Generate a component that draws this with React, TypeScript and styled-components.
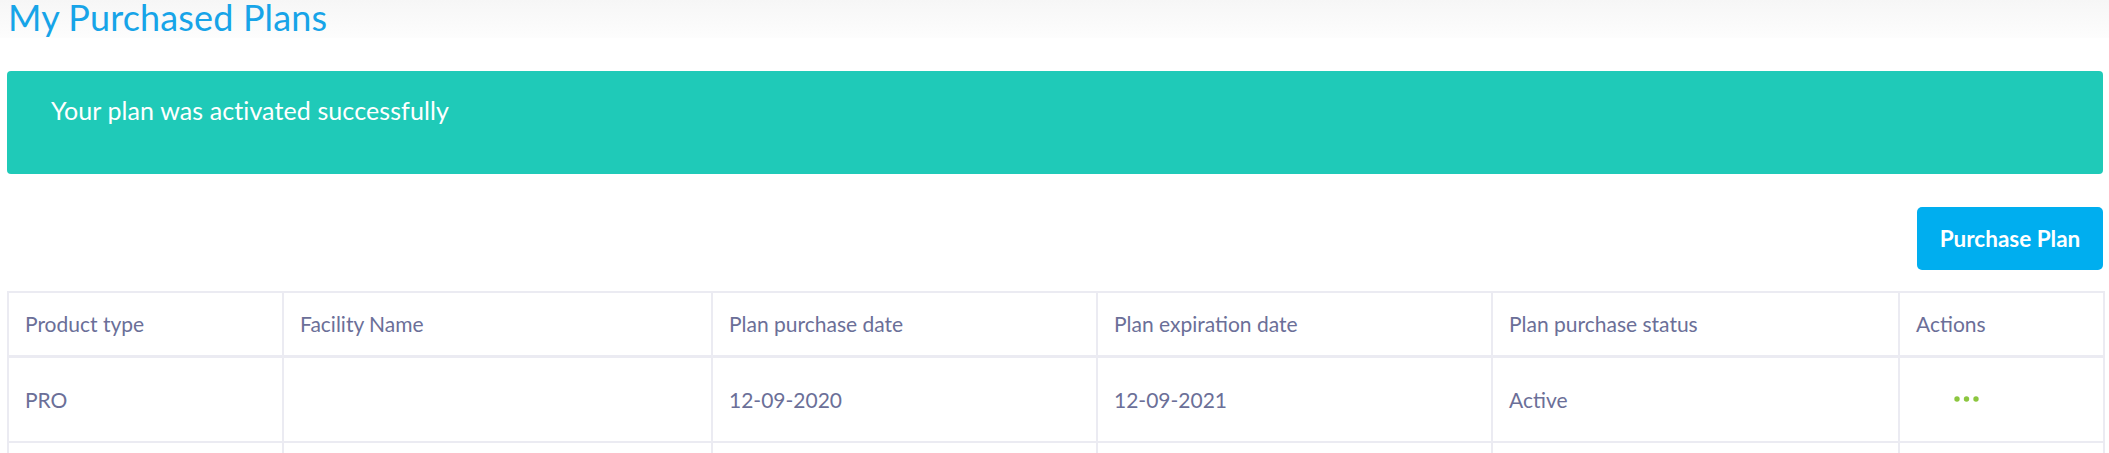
import React from "react";
import styled, { createGlobalStyle } from "styled-components";

const GlobalStyle = createGlobalStyle`
  html, body {
    margin: 0;
    padding: 0;
    background: #ffffff;
    overflow: hidden;
    font-family: "Lato", "Liberation Sans", sans-serif;
  }
  * { box-sizing: border-box; }
`;

const Page = styled.div`
  width: 2109px;
  display: flex;
  flex-direction: column;
`;

const TitleBar = styled.header`
  height: 38px;
  padding-left: 8px;
  background: linear-gradient(180deg, #f6f6f6 0%, #fdfdfd 100%);
  display: flex;
  align-items: flex-start;
`;

const Title = styled.h1`
  margin: 0;
  font-family: "Lato", "Liberation Sans", sans-serif;
  font-weight: 400;
  font-size: 36px;
  line-height: 34px;
  color: #17a4e8;
  letter-spacing: 0.15px;
`;

const Content = styled.main`
  padding: 33px 6px 0 7px;
  display: flex;
  flex-direction: column;
`;

const Alert = styled.div`
  height: 103px;
  border-radius: 4px;
  background: #1fcab8;
  padding: 23px 0 0 44px;
`;

const AlertText = styled.p`
  margin: 0;
  color: #ffffff;
  font-size: 25px;
  line-height: 32px;
  font-weight: 400;
  letter-spacing: 0.1px;
`;

const Toolbar = styled.div`
  display: flex;
  justify-content: flex-end;
  margin-top: 33px;
  margin-bottom: 21px;
`;

const PrimaryButton = styled.button`
  width: 186px;
  height: 63px;
  border: none;
  border-radius: 5px;
  background: #00aeef;
  color: #ffffff;
  font-family: "Lato", "Liberation Sans", sans-serif;
  font-weight: 700;
  font-size: 22.5px;
  cursor: pointer;
  padding: 0;
`;

const Table = styled.table`
  width: 100%;
  table-layout: fixed;
  border-collapse: collapse;
  border: 2px solid #ebebf2;
`;

const Col = styled.col<{ $w: number }>`
  width: ${(p) => p.$w}px;
`;

const HeadCell = styled.th`
  height: 64px;
  padding: 0 16px;
  border: 2px solid #ebebf2;
  border-bottom-width: 3px;
  text-align: left;
  font-weight: 400;
  font-size: 21px;
  color: #6b6f98;
  vertical-align: middle;
`;

const Cell = styled.td`
  height: 86px;
  padding: 0 16px;
  border: 2px solid #ebebf2;
  font-size: 21px;
  color: #6b6f98;
  vertical-align: middle;
`;

const ActionButton = styled.button`
  width: 101px;
  height: 20px;
  padding: 0;
  border: none;
  background: transparent;
  display: flex;
  align-items: center;
  justify-content: center;
  cursor: pointer;
`;

const DotsIcon = () => (
  <svg width="26" height="6" viewBox="0 0 26 6" aria-hidden="true">
    <circle cx="3" cy="3" r="2.7" fill="#8cc63f" />
    <circle cx="12.5" cy="3" r="2.7" fill="#8cc63f" />
    <circle cx="22" cy="3" r="2.7" fill="#8cc63f" />
  </svg>
);

const columns = [
  { label: "Product type", w: 275 },
  { label: "Facility Name", w: 429 },
  { label: "Plan purchase date", w: 385 },
  { label: "Plan expiration date", w: 395 },
  { label: "Plan purchase status", w: 407 },
  { label: "Actions", w: 205 },
];

const plans = [
  { type: "PRO", facility: "", purchased: "12-09-2020", expires: "12-09-2021", status: "Active" },
  { type: "", facility: "", purchased: "", expires: "", status: "" },
];

export default function App() {
  return (
    <>
      <GlobalStyle />
      <Page>
        <TitleBar>
          <Title>My Purchased Plans</Title>
        </TitleBar>
        <Content>
          <Alert>
            <AlertText>Your plan was activated successfully</AlertText>
          </Alert>
          <Toolbar>
            <PrimaryButton>Purchase Plan</PrimaryButton>
          </Toolbar>
          <Table>
            <colgroup>
              {columns.map((c) => (
                <Col key={c.label} $w={c.w} />
              ))}
            </colgroup>
            <thead>
              <tr>
                {columns.map((c) => (
                  <HeadCell key={c.label}>{c.label}</HeadCell>
                ))}
              </tr>
            </thead>
            <tbody>
              {plans.map((p, i) => (
                <tr key={i}>
                  <Cell>{p.type}</Cell>
                  <Cell>{p.facility}</Cell>
                  <Cell>{p.purchased}</Cell>
                  <Cell>{p.expires}</Cell>
                  <Cell>{p.status}</Cell>
                  <Cell>
                    {p.status && (
                      <ActionButton aria-label="Actions">
                        <DotsIcon />
                      </ActionButton>
                    )}
                  </Cell>
                </tr>
              ))}
            </tbody>
          </Table>
        </Content>
      </Page>
    </>
  );
}
